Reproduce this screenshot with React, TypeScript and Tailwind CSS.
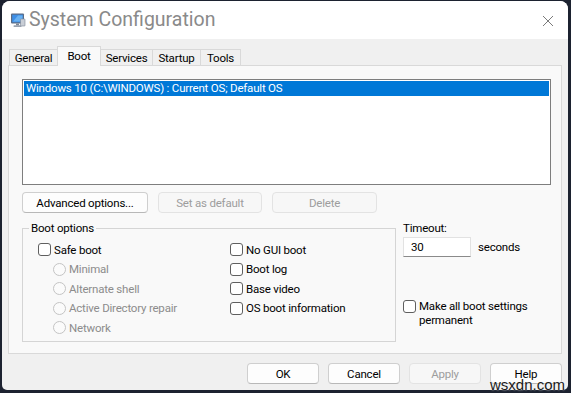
import React from "react";

function CheckBox() {
  return <span className="inline-block w-[13px] h-[13px] rounded-[3px] border border-[#5f5f5f] bg-white shrink-0" />;
}

function Radio() {
  return <span className="inline-block w-[13px] h-[13px] rounded-full border border-[#c4c4c4] bg-[#fbfbfb] shrink-0" />;
}

function Btn({ children, disabled, w }: { children: React.ReactNode; disabled?: boolean; w: string }) {
  return (
    <div
      className={
        "h-[21px] rounded-[4px] border flex items-center justify-center shrink-0 " +
        w +
        (disabled
          ? " border-[#e3e3e3] bg-[#f7f7f7] text-[#9d9d9d]"
          : " border-[#cfcfcf] border-b-[#b8b8b8] bg-[#fdfdfd] text-black")
      }
    >
      {children}
    </div>
  );
}

function Tab({ label, selected, w }: { label: string; selected?: boolean; w: string }) {
  return selected ? (
    <div className={"h-[20px] mb-[-1px] relative z-10 bg-[#f9f9f9] border border-b-0 border-[#d9d9d9] flex items-start justify-center pt-[1px] " + w}>
      {label}
    </div>
  ) : (
    <div className={"h-[16px] bg-[#f0f0f0] border-t border-l border-[#d9d9d9] flex items-center justify-center " + w}>
      {label}
    </div>
  );
}

export default function App() {
  return (
    <div className="w-[571px] h-[393px] bg-[#1c2230] pt-[1px] pl-[2px] overflow-hidden relative font-['Roboto',sans-serif] text-[11.5px] tracking-[-0.2px] leading-[16px] text-black">
      <div className="w-[566px] h-[389px] bg-[#f0f0f0] rounded-t-[8px] rounded-b-[5px] overflow-hidden flex flex-col">
        {/* Title bar */}
        <div className="h-[38px] bg-white flex items-center pl-[8px] pr-[14px] shrink-0">
          <svg width="16" height="16" viewBox="0 0 16 16" className="shrink-0">
            <rect x="1" y="1.5" width="13" height="10" rx="1" fill="#5a6b85" />
            <rect x="2.2" y="2.7" width="10.6" height="7.6" fill="#3d8ee6" />
            <path d="M3 9.5 L8 3.5 L12.5 3.5 L12.5 9.5 Z" fill="#7cc0f7" opacity="0.7" />
            <rect x="6" y="11.5" width="3" height="2" fill="#7d8796" />
            <rect x="3.5" y="13.3" width="8" height="1.6" rx="0.6" fill="#9aa3b0" />
            <rect x="10.5" y="7" width="4.5" height="7" rx="0.6" fill="#c9ced6" stroke="#7d8796" strokeWidth="0.6" />
          </svg>
          <div className="ml-[3px] text-[19.5px] leading-[24px] tracking-normal text-[#8a8a8a] font-normal">System Configuration</div>
          <div className="flex-1" />
          <svg width="12" height="12" viewBox="0 0 12 12" className="mt-[1px]">
            <path d="M1 1 L11 11 M11 1 L1 11" stroke="#7a7a7a" strokeWidth="1" />
          </svg>
        </div>

        {/* Tabs */}
        <div className="h-[26px] flex items-end pl-[7px] pt-[7px] shrink-0">
          <Tab label="General" w="w-[48px]" />
          <Tab label="Boot" selected w="w-[44px]" />
          <Tab label="Services" w="w-[51px] border-l-0" />
          <Tab label="Startup" w="w-[48px]" />
          <Tab label="Tools" w="w-[41px] border-r" />
        </div>

        {/* Panel */}
        <div className="ml-[6px] w-[554px] h-[289px] border border-[#d9d9d9] bg-[#f9f9f9] shrink-0 flex flex-col pl-[13px] pt-[13px]">
          <div className="w-[529px] h-[106px] border border-[#7e7e7e] bg-white p-[1px]">
            <div className="h-[15px] bg-[#0078d7] text-white leading-[15px] pl-[2px]">
              Windows 10 (C:\WINDOWS) : Current OS; Default OS
            </div>
          </div>

          <div className="flex gap-[10px] mt-[7px]">
            <Btn w="w-[126px]">Advanced options...</Btn>
            <Btn w="w-[104px]" disabled>Set as default</Btn>
            <Btn w="w-[105px]" disabled>Delete</Btn>
          </div>

          <div className="flex mt-[7px]">
            <fieldset className="w-[374px] h-[122px] border border-[#d5d5d5] pl-[15px] pt-[4px] flex">
              <legend className="ml-[-9px] px-[2px] leading-[16px]">Boot options</legend>
              <div className="w-[192px] flex flex-col">
                <div className="h-[19.5px] flex items-center gap-[3px]"><CheckBox />Safe boot</div>
                <div className="h-[19.5px] flex items-center gap-[3px] pl-[15px] text-[#8c8c8c]"><Radio />Minimal</div>
                <div className="h-[19.5px] flex items-center gap-[3px] pl-[15px] text-[#8c8c8c]"><Radio />Alternate shell</div>
                <div className="h-[19.5px] flex items-center gap-[3px] pl-[15px] text-[#8c8c8c]"><Radio />Active Directory repair</div>
                <div className="h-[19.5px] flex items-center gap-[3px] pl-[15px] text-[#8c8c8c]"><Radio />Network</div>
              </div>
              <div className="flex flex-col">
                <div className="h-[19.5px] flex items-center gap-[3px]"><CheckBox />No GUI boot</div>
                <div className="h-[19.5px] flex items-center gap-[3px]"><CheckBox />Boot log</div>
                <div className="h-[19.5px] flex items-center gap-[3px]"><CheckBox />Base video</div>
                <div className="h-[19.5px] flex items-center gap-[3px]"><CheckBox />OS boot information</div>
              </div>
            </fieldset>

            <div className="ml-[7px] flex flex-col">
              <div className="leading-[16px]">Timeout:</div>
              <div className="flex items-center mt-[1px]">
                <div className="w-[68px] h-[20px] bg-white border border-[#e2e2e2] border-b-[#8a8a8a] flex items-center pl-[7px]">30</div>
                <div className="ml-[7px]">seconds</div>
              </div>
              <div className="flex items-start gap-[3px] mt-[42px]">
                <span className="mt-[1px] flex"><CheckBox /></span>
                <div className="leading-[14px]">Make all boot settings<br />permanent</div>
              </div>
            </div>
          </div>
        </div>

        {/* Bottom buttons */}
        <div className="flex justify-end gap-[9px] pr-[6px] mt-[9px]">
          <Btn w="w-[72px]">OK</Btn>
          <Btn w="w-[72px]">Cancel</Btn>
          <Btn w="w-[72px]" disabled>Apply</Btn>
          <Btn w="w-[72px]">Help</Btn>
        </div>
      </div>
      <div className="absolute left-[490px] top-[377px] font-['Liberation_Sans',sans-serif] text-[15px] leading-[15px] tracking-normal text-[#1a1a1a] [text-shadow:0_0_2px_white]">
        wsxdn.com
      </div>
    </div>
  );
}
